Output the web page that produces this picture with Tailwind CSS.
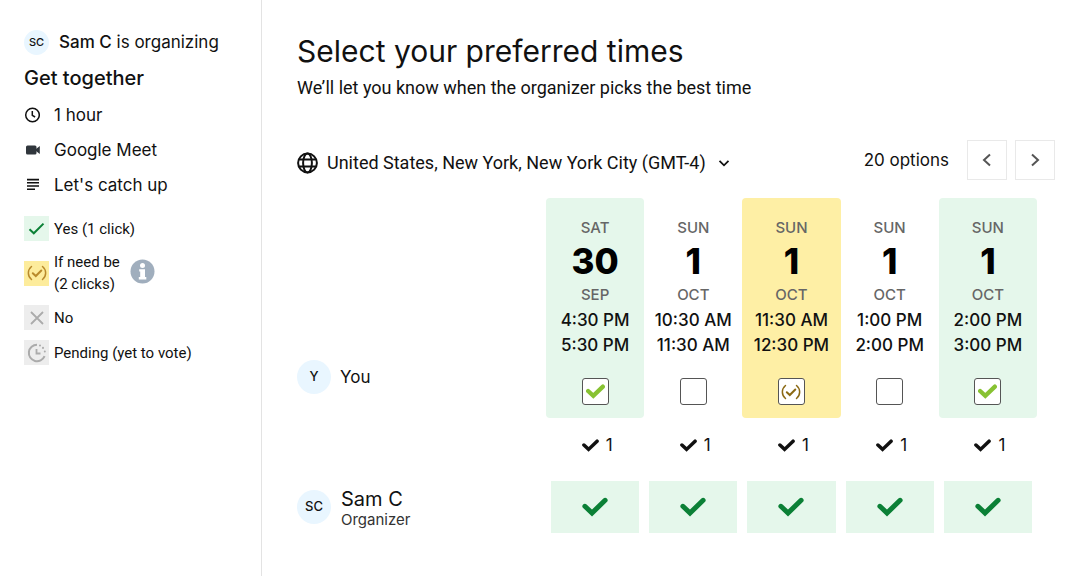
<!DOCTYPE html>
<html lang="en">
<head>
  <meta charset="UTF-8" />
  <meta name="viewport" content="width=device-width, initial-scale=1.0"/>
  <title>Get together | Select your preferred times</title>
  <script src="https://cdn.jsdelivr.net/npm/@tailwindcss/browser@4"></script>
</head>
<body class="bg-white font-['Inter','Liberation_Sans',sans-serif] text-[#111111]">

  <!-- Shared icons -->
  <svg class="hidden" aria-hidden="true">
    <symbol id="icon-check" viewBox="0 0 26 20">
      <path d="M2.9 9.3 L10 16 L23.1 3.3" fill="none" stroke="currentColor" stroke-linecap="round" />
    </symbol>
    <symbol id="icon-if-need-be" viewBox="0 0 20 16">
      <path d="M4.5 1.5 C0.3 5 0.3 11 4.5 14.5 M15.5 1.5 C19.7 5 19.7 11 15.5 14.5" fill="none" stroke="currentColor" stroke-width="1.5" stroke-linecap="round" />
      <path d="M5.8 8.2 L8.8 11 L14.3 5.5" fill="none" stroke="currentColor" stroke-width="2" stroke-linecap="round" />
    </symbol>
  </svg>

  <div class="flex min-h-screen">

    <!-- Event details -->
    <aside class="w-[262px] shrink-0 border-r border-[#e3e3e3] pl-[24px] pt-[29px]">
      <div class="flex items-center gap-[10px]">
        <span class="flex size-[25px] items-center justify-center rounded-full bg-[#e9f6ff] text-[11px] font-medium">SC</span>
        <p class="text-[17px] leading-[26px]"><span class="font-medium">Sam C</span> is organizing</p>
      </div>
      <h2 class="mt-[10px] text-[20px] leading-[26px] font-medium">Get together</h2>

      <ul class="mt-[11px] space-y-[9px] text-[17px] leading-[26px]">
        <li class="flex items-center gap-[14px]">
          <svg class="size-4" viewBox="0 0 16 16" fill="none" stroke="currentColor" stroke-width="1.5" aria-hidden="true">
            <circle cx="8.5" cy="8" r="6.8" />
            <path d="M8.3 4 V8.3 L11.1 10" />
          </svg>
          1 hour
        </li>
        <li class="flex items-center gap-[14px]">
          <svg class="size-4" viewBox="0 0 16 16" fill="#30363c" aria-hidden="true">
            <rect x="2" y="3.5" width="10.5" height="9" rx="1.5" />
            <path d="M12 7 L15.8 4 V12 L12 9 Z" />
          </svg>
          Google Meet
        </li>
        <li class="flex items-center gap-[14px]">
          <svg class="size-4" viewBox="0 0 16 16" stroke="currentColor" stroke-width="1.6" aria-hidden="true">
            <path d="M3 2.6 H15 M3 5.8 H15 M3 9 H15 M3 12.2 H11" />
          </svg>
          Let's catch up
        </li>
      </ul>

      <ul class="mt-[18px] space-y-[10px] font-['Roboto','Inter',sans-serif] text-[15px] leading-[22px]">
        <li class="flex items-center gap-[5px]">
          <span class="flex size-[25px] items-center justify-center bg-[#e5f7eb] text-[#0b8036]">
            <svg class="size-[17px]" viewBox="0 0 17 17" fill="none" stroke="currentColor" stroke-width="2" aria-hidden="true"><path d="M1.5 9.3 L5.8 13.3 L15.5 3.6" /></svg>
          </span>
          Yes (1 click)
        </li>
        <li class="flex items-center gap-[5px]">
          <span class="flex size-[25px] items-center justify-center bg-[#fdec9c] text-[#b98a2c]">
            <svg class="h-4 w-5" aria-hidden="true"><use href="#icon-if-need-be" /></svg>
          </span>
          <span>If need be<br>(2 clicks)</span>
          <svg class="mb-1 ml-[5px] size-[25px]" viewBox="0 0 25 25" role="img" aria-label="More information">
            <circle cx="12.5" cy="12.5" r="12" fill="#a0aebd" />
            <circle cx="12.5" cy="6.5" r="2.5" fill="#fff" />
            <path d="M9.2 10.2 H15 V18 H16.3 V20.4 H8.8 V18 H10.2 V12.4 H9.2 Z" fill="#fff" />
          </svg>
        </li>
        <li class="flex items-center gap-[5px]">
          <span class="flex size-[25px] items-center justify-center bg-[#ededed] text-[#ababab]">
            <svg class="size-[14px]" viewBox="0 0 14 14" stroke="currentColor" stroke-width="1.8" aria-hidden="true"><path d="M1 1 L13 13 M13 1 L1 13" /></svg>
          </span>
          No
        </li>
        <li class="flex items-center gap-[5px]">
          <span class="flex size-[25px] items-center justify-center bg-[#ededed] text-[#ababab]">
            <svg class="size-5" viewBox="0 0 20 20" fill="none" stroke="currentColor" stroke-width="2" aria-hidden="true">
              <path d="M10 1.8 A8.2 8.2 0 1 0 17.6 13.2" />
              <path d="M9.5 6 V10.5 H13.5" stroke-width="1.8" />
              <path d="M13 2.4 V2.5 M16 4.8 V4.9 M17.8 8.5 V8.6" stroke-linecap="round" />
            </svg>
          </span>
          Pending (yet to vote)
        </li>
      </ul>
    </aside>

    <!-- Voting -->
    <main class="flex-1 pt-[31px] pr-[25px] pl-[35px]">
      <h1 class="text-[30px] leading-[40px]">Select your preferred times</h1>
      <p class="mt-[4px] font-['Roboto','Inter',sans-serif] text-[18px] leading-[26px]">We’ll let you know when the organizer picks the best time</p>

      <div class="mt-[39px] flex items-center justify-between">
        <div class="flex items-center gap-[8px] pt-[6px]">
          <svg class="size-[22px]" viewBox="0 0 22 22" fill="none" stroke="currentColor" stroke-width="2" aria-hidden="true">
            <circle cx="10.5" cy="11" r="9.4" />
            <ellipse cx="10.5" cy="11" rx="4.4" ry="9.4" />
            <path d="M2 7.5 H19 M2 14.5 H19" />
          </svg>
          <div class="flex items-center gap-[12px]">
            <select aria-label="Time zone" class="appearance-none bg-transparent font-['Roboto','Inter',sans-serif] text-[18px] leading-[26px]">
              <option>United States, New York, New York City (GMT-4)</option>
            </select>
            <svg class="size-3" viewBox="0 0 12 12" fill="none" stroke="currentColor" stroke-width="1.8" aria-hidden="true"><path d="M1.5 3.8 L6 8.3 L10.5 3.8" /></svg>
          </div>
        </div>
        <div class="flex items-center">
          <span class="mr-[18px] text-[17px] leading-[26px]">20 options</span>
          <button type="button" aria-label="Previous options" class="mr-[8px] flex size-[40px] items-center justify-center border border-[#e9e9e9] text-[#555555]">
            <svg class="size-4" viewBox="0 0 16 16" fill="none" stroke="currentColor" stroke-width="2" aria-hidden="true"><path d="M11 2.5 L5 8 L11 13.5" /></svg>
          </button>
          <button type="button" aria-label="Next options" class="flex size-[40px] items-center justify-center border border-[#e9e9e9] text-[#555555]">
            <svg class="size-4" viewBox="0 0 16 16" fill="none" stroke="currentColor" stroke-width="2" aria-hidden="true"><path d="M5 2.5 L11 8 L5 13.5" /></svg>
          </button>
        </div>
      </div>

      <div class="mt-[18px] pr-[18px]">
        <table class="w-full table-fixed text-center">
          <thead>
            <tr>
              <td class="w-[249px]"></td>
              <th scope="col" class="rounded-t-[4px] bg-[#e5f7eb] pt-[18px] font-normal">
                <div class="text-[15px] leading-[24px] font-medium text-[#666666]">SAT</div>
                <div class="text-[35px] leading-[42px] font-extrabold text-black">30</div>
                <div class="text-[15px] leading-[26px] font-medium text-[#666666]">SEP</div>
                <div class="text-[17px] leading-[25px] font-medium">4:30 PM</div>
                <div class="text-[17px] leading-[25px] font-medium">5:30 PM</div>
              </th>
              <th scope="col" class="pt-[18px] font-normal">
                <div class="text-[15px] leading-[24px] font-medium text-[#666666]">SUN</div>
                <div class="text-[35px] leading-[42px] font-extrabold text-black">1</div>
                <div class="text-[15px] leading-[26px] font-medium text-[#666666]">OCT</div>
                <div class="text-[17px] leading-[25px] font-medium">10:30 AM</div>
                <div class="text-[17px] leading-[25px] font-medium">11:30 AM</div>
              </th>
              <th scope="col" class="rounded-t-[4px] bg-[#feefa5] pt-[18px] font-normal">
                <div class="text-[15px] leading-[24px] font-medium text-[#666666]">SUN</div>
                <div class="text-[35px] leading-[42px] font-extrabold text-black">1</div>
                <div class="text-[15px] leading-[26px] font-medium text-[#666666]">OCT</div>
                <div class="text-[17px] leading-[25px] font-medium">11:30 AM</div>
                <div class="text-[17px] leading-[25px] font-medium">12:30 PM</div>
              </th>
              <th scope="col" class="pt-[18px] font-normal">
                <div class="text-[15px] leading-[24px] font-medium text-[#666666]">SUN</div>
                <div class="text-[35px] leading-[42px] font-extrabold text-black">1</div>
                <div class="text-[15px] leading-[26px] font-medium text-[#666666]">OCT</div>
                <div class="text-[17px] leading-[25px] font-medium">1:00 PM</div>
                <div class="text-[17px] leading-[25px] font-medium">2:00 PM</div>
              </th>
              <th scope="col" class="rounded-t-[4px] bg-[#e5f7eb] pt-[18px] font-normal">
                <div class="text-[15px] leading-[24px] font-medium text-[#666666]">SUN</div>
                <div class="text-[35px] leading-[42px] font-extrabold text-black">1</div>
                <div class="text-[15px] leading-[26px] font-medium text-[#666666]">OCT</div>
                <div class="text-[17px] leading-[25px] font-medium">2:00 PM</div>
                <div class="text-[17px] leading-[25px] font-medium">3:00 PM</div>
              </th>
            </tr>
          </thead>
          <tbody>
            <tr>
              <th scope="row" class="pt-[2px] align-top text-left font-normal">
                <div class="flex items-center gap-[9px]">
                  <span class="flex size-[34px] items-center justify-center rounded-full bg-[#e9f6ff] text-[13px] font-medium">Y</span>
                  <span class="text-[17px] leading-[26px]">You</span>
                </div>
              </th>
              <td class="rounded-b-[4px] bg-[#e5f7eb] pt-[20px] pb-[13px]">
                <label class="inline-grid place-items-center align-top">
                  <input type="checkbox" checked aria-label="Sat 30 Sep, 4:30 PM to 5:30 PM" class="col-start-1 row-start-1 size-[27px] appearance-none rounded-[3px] border border-[#555555] bg-white" />
                  <svg class="pointer-events-none col-start-1 row-start-1 h-[15px] w-[19px] text-[#87c232]" stroke-width="5.8" aria-hidden="true"><use href="#icon-check" /></svg>
                </label>
              </td>
              <td class="pt-[20px] pb-[13px]">
                <label class="inline-grid place-items-center align-top">
                  <input type="checkbox" aria-label="Sun 1 Oct, 10:30 AM to 11:30 AM" class="col-start-1 row-start-1 size-[27px] appearance-none rounded-[3px] border border-[#555555] bg-white" />
                </label>
              </td>
              <td class="rounded-b-[4px] bg-[#feefa5] pt-[20px] pb-[13px]">
                <label class="inline-grid place-items-center align-top">
                  <input type="checkbox" checked aria-label="Sun 1 Oct, 11:30 AM to 12:30 PM, if need be" class="col-start-1 row-start-1 size-[27px] appearance-none rounded-[3px] border border-[#555555] bg-white" />
                  <svg class="pointer-events-none col-start-1 row-start-1 h-4 w-5 text-[#8b6914]" aria-hidden="true"><use href="#icon-if-need-be" /></svg>
                </label>
              </td>
              <td class="pt-[20px] pb-[13px]">
                <label class="inline-grid place-items-center align-top">
                  <input type="checkbox" aria-label="Sun 1 Oct, 1:00 PM to 2:00 PM" class="col-start-1 row-start-1 size-[27px] appearance-none rounded-[3px] border border-[#555555] bg-white" />
                </label>
              </td>
              <td class="rounded-b-[4px] bg-[#e5f7eb] pt-[20px] pb-[13px]">
                <label class="inline-grid place-items-center align-top">
                  <input type="checkbox" checked aria-label="Sun 1 Oct, 2:00 PM to 3:00 PM" class="col-start-1 row-start-1 size-[27px] appearance-none rounded-[3px] border border-[#555555] bg-white" />
                  <svg class="pointer-events-none col-start-1 row-start-1 h-[15px] w-[19px] text-[#87c232]" stroke-width="5.8" aria-hidden="true"><use href="#icon-check" /></svg>
                </label>
              </td>
            </tr>
            <tr>
              <td></td>
              <td class="pt-[14px] pb-[23px]">
                <div class="flex items-center justify-center gap-[7px] pl-[4px] text-[17px] leading-[26px]"><svg class="h-[13px] w-[17px]" stroke-width="5.4" aria-hidden="true"><use href="#icon-check" /></svg>1</div>
              </td>
              <td class="pt-[14px] pb-[23px]">
                <div class="flex items-center justify-center gap-[7px] pl-[4px] text-[17px] leading-[26px]"><svg class="h-[13px] w-[17px]" stroke-width="5.4" aria-hidden="true"><use href="#icon-check" /></svg>1</div>
              </td>
              <td class="pt-[14px] pb-[23px]">
                <div class="flex items-center justify-center gap-[7px] pl-[4px] text-[17px] leading-[26px]"><svg class="h-[13px] w-[17px]" stroke-width="5.4" aria-hidden="true"><use href="#icon-check" /></svg>1</div>
              </td>
              <td class="pt-[14px] pb-[23px]">
                <div class="flex items-center justify-center gap-[7px] pl-[4px] text-[17px] leading-[26px]"><svg class="h-[13px] w-[17px]" stroke-width="5.4" aria-hidden="true"><use href="#icon-check" /></svg>1</div>
              </td>
              <td class="pt-[14px] pb-[23px]">
                <div class="flex items-center justify-center gap-[7px] pl-[4px] text-[17px] leading-[26px]"><svg class="h-[13px] w-[17px]" stroke-width="5.4" aria-hidden="true"><use href="#icon-check" /></svg>1</div>
              </td>
            </tr>
            <tr>
              <th scope="row" class="text-left font-normal">
                <div class="flex items-center gap-[10px]">
                  <span class="flex size-[34px] items-center justify-center rounded-full bg-[#e9f6ff] text-[13px] font-medium">SC</span>
                  <span class="pt-[3px]">
                    <span class="block text-[20px] leading-[22px]">Sam C</span>
                    <span class="block text-[15px] leading-[20px] text-[#333333]">Organizer</span>
                  </span>
                </div>
              </th>
              <td class="px-[5px]">
                <div class="flex h-[52px] items-center justify-center bg-[#e5f7eb] text-[#0b8036]"><svg class="h-5 w-[26px]" stroke-width="5" role="img" aria-label="Yes"><use href="#icon-check" /></svg></div>
              </td>
              <td class="px-[5px]">
                <div class="flex h-[52px] items-center justify-center bg-[#e5f7eb] text-[#0b8036]"><svg class="h-5 w-[26px]" stroke-width="5" role="img" aria-label="Yes"><use href="#icon-check" /></svg></div>
              </td>
              <td class="px-[5px]">
                <div class="flex h-[52px] items-center justify-center bg-[#e5f7eb] text-[#0b8036]"><svg class="h-5 w-[26px]" stroke-width="5" role="img" aria-label="Yes"><use href="#icon-check" /></svg></div>
              </td>
              <td class="px-[5px]">
                <div class="flex h-[52px] items-center justify-center bg-[#e5f7eb] text-[#0b8036]"><svg class="h-5 w-[26px]" stroke-width="5" role="img" aria-label="Yes"><use href="#icon-check" /></svg></div>
              </td>
              <td class="px-[5px]">
                <div class="flex h-[52px] items-center justify-center bg-[#e5f7eb] text-[#0b8036]"><svg class="h-5 w-[26px]" stroke-width="5" role="img" aria-label="Yes"><use href="#icon-check" /></svg></div>
              </td>
            </tr>
          </tbody>
        </table>
      </div>
    </main>
  </div>

</body>
</html>
